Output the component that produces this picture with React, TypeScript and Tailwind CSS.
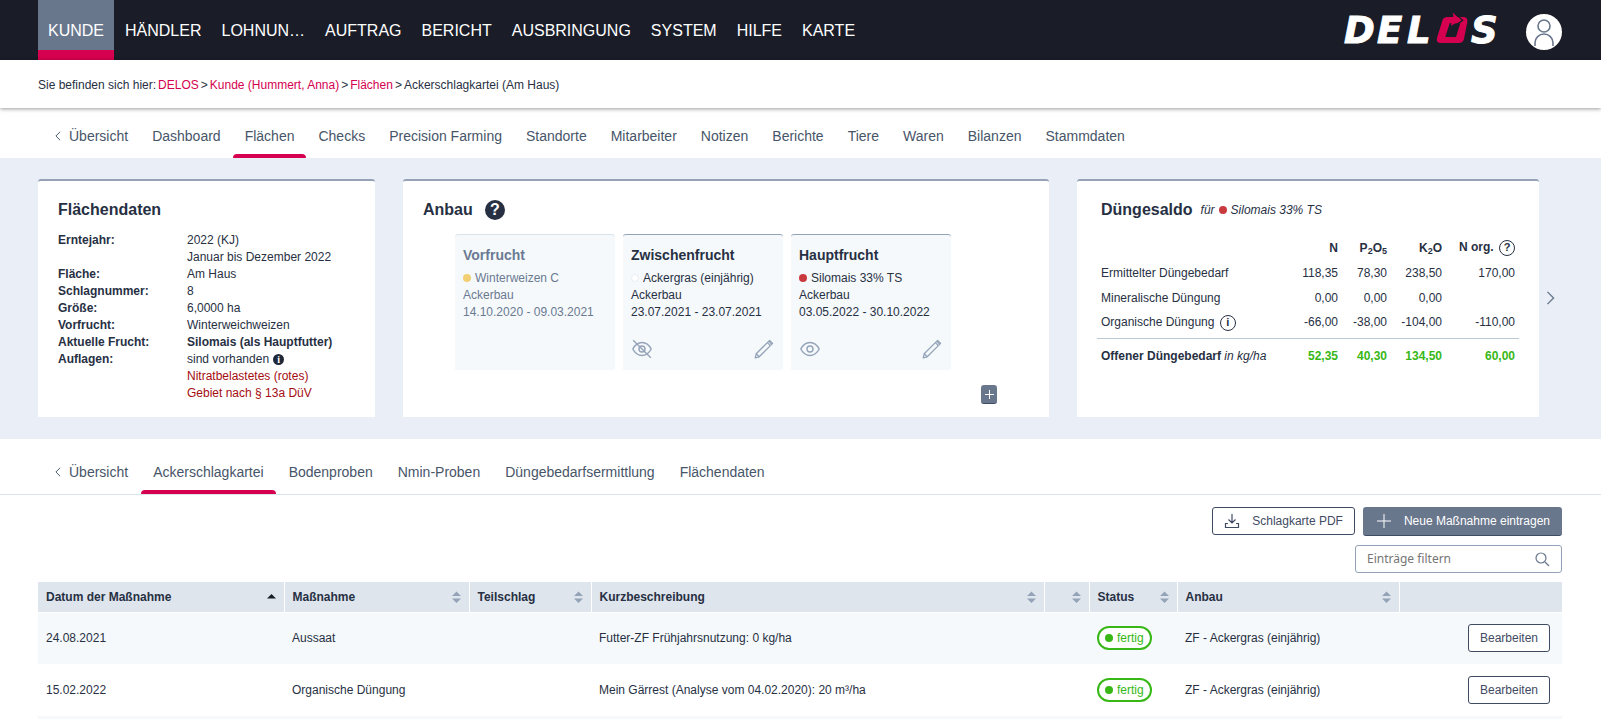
import React from 'react';
import { clsx } from 'clsx';

const mainNav = ['KUNDE', 'HÄNDLER', 'LOHNUN…', 'AUFTRAG', 'BERICHT', 'AUSBRINGUNG', 'SYSTEM', 'HILFE', 'KARTE'];

const customerTabs = [
  'Dashboard', 'Flächen', 'Checks', 'Precision Farming', 'Standorte', 'Mitarbeiter',
  'Notizen', 'Berichte', 'Tiere', 'Waren', 'Bilanzen', 'Stammdaten',
];

const fieldTabs = ['Ackerschlagkartei', 'Bodenproben', 'Nmin-Proben', 'Düngebedarfsermittlung', 'Flächendaten'];

const crops = [
  { title: 'Vorfrucht', dot: 'bg-[#f1cf72]', name: 'Winterweizen C', dates: '14.10.2020 - 09.03.2021', past: true, hidden: false },
  { title: 'Zwischenfrucht', dot: 'bg-white border border-[#e8eef4]', name: 'Ackergras (einjährig)', dates: '23.07.2021 - 23.07.2021', past: false, hidden: true },
  { title: 'Hauptfrucht', dot: 'bg-[#c93a3f]', name: 'Silomais 33% TS', dates: '03.05.2022 - 30.10.2022', past: false, hidden: false },
];

const balance = [
  { label: 'Ermittelter Düngebedarf', values: ['118,35', '78,30', '238,50', '170,00'], info: false },
  { label: 'Mineralische Düngung', values: ['0,00', '0,00', '0,00', ''], info: false },
  { label: 'Organische Düngung', values: ['-66,00', '-38,00', '-104,00', '-110,00'], info: true },
];

const columns = [
  { label: 'Datum der Maßnahme', width: 'w-[246px]', sort: 'asc' },
  { label: 'Maßnahme', width: 'w-[185px]', sort: 'none' },
  { label: 'Teilschlag', width: 'w-[122px]', sort: 'none' },
  { label: 'Kurzbeschreibung', width: '', sort: 'none' },
  { label: '', width: 'w-[45px]', sort: 'none' },
  { label: 'Status', width: 'w-[88px]', sort: 'none' },
  { label: 'Anbau', width: 'w-[222px]', sort: 'none' },
  { label: '', width: 'w-[163px]', sort: '' },
];

const measures = [
  { date: '24.08.2021', type: 'Aussaat', text: 'Futter-ZF Frühjahrsnutzung: 0 kg/ha', crop: 'ZF - Ackergras (einjährig)' },
  { date: '15.02.2022', type: 'Organische Düngung', text: 'Mein Gärrest (Analyse vom 04.02.2020): 20 m³/ha', crop: 'ZF - Ackergras (einjährig)' },
];

const Logo = () => (
  <svg className="overflow-visible" width="157" height="44" viewBox="0 0 157 44" role="img" aria-label="DELOS">
    <g
      fill="#fff"
      stroke="#fff"
      strokeWidth="1"
      fontFamily="'DejaVu Sans', sans-serif"
      fontWeight="700"
      fontStyle="italic"
      fontSize="37"
    >
      <text x="-1" y="35">D</text>
      <text x="32" y="35">E</text>
      <text x="62" y="35">L</text>
      <text x="126" y="35">S</text>
    </g>
    <g transform="scale(.3333) translate(-44 -24)">
      <path
        d="M336 62Q339 51 352 51H398Q413 51 411 66L401 117Q398 129 385 129H331Q317 129 320 114ZM358 70L345 111H377L390 70Z"
        fill="#d5004f"
        fillRule="evenodd"
      />
      <path d="M374 40L397 61 372 79" fill="none" stroke="#1a1d28" strokeWidth="4" />
      <path d="M368 38L391 60 362 78 364 68H352V51H369Z" fill="#d5004f" />
    </g>
  </svg>
);

const Chevron = ({ right = false, className = '' }: { right?: boolean; className?: string }) => (
  <svg className={className} viewBox="0 0 10 16" fill="none" stroke="currentColor" strokeWidth="1.6">
    <path d={right ? 'M1.500 1l7 7-7 7' : 'M8.500 1l-7 7 7 7'} />
  </svg>
);

const EyeIcon = ({ off }: { off: boolean }) => (
  <svg width="20" height="20" viewBox="0 0 20 20" fill="none" stroke="#94a3b8" strokeWidth="1.4">
    <path d="M.8 10C3 5.800 6.300 3.500 10 3.500s7 2.300 9.200 6.500c-2.200 4.200-5.500 6.500-9.200 6.500S3 14.200.8 10z" />
    <circle cx="10" cy="10" r="3" />
    {off && <path d="M1.200 1.200l17.600 17.600" />}
  </svg>
);

const PencilIcon = () => (
  <svg width="20" height="20" viewBox="0 0 20 20" fill="none" stroke="#94a3b8" strokeWidth="1.3" strokeLinejoin="round">
    <path d="M1.200 18.800l1-4L15.600 1.400l3 3L5.200 17.800z" />
    <path d="M13.400 3.600l3 3M14.800 2.200l3 3M2.200 14.800l3 3" />
  </svg>
);

const SortIcon = ({ sort }: { sort: string }) => (
  <svg width="9" height="12" viewBox="0 0 9 12" aria-hidden="true">
    {sort === 'asc' ? (
      <path d="M0 7.500L4.500 3 9 7.500z" fill="#1a1d28" />
    ) : (
      <path d="M0 5L4.500.5 9 5zM0 7.500L4.500 12 9 7.500z" fill="#94a3b8" />
    )}
  </svg>
);

const RoundBadge = ({ children }: { children: string }) => (
  <button
    type="button"
    className="ml-0.5 inline-flex size-4 items-center justify-center rounded-full border border-[#273043] align-middle text-[11px] font-bold leading-none"
  >
    {children}
  </button>
);

const Tabs = ({ items, active, className }: { items: string[]; active: string; className?: string }) => (
  <ul className={clsx('flex text-sm text-[#475569]', className)}>
    {['Übersicht', ...items].map((item, i) => (
      <li key={item} className="relative">
        <a href="#" className="flex items-center px-3 pt-4 pb-3 leading-5">
          {i === 0 && <Chevron className="mr-2 h-2.5 w-1.5" />}
          {item}
        </a>
        {item === active && <span className="absolute inset-x-0 bottom-0 h-1 rounded-t bg-[#d5004f]" />}
      </li>
    ))}
  </ul>
);

const Card = ({ children }: { children: React.ReactNode }) => (
  <section className="rounded-t-[3px] border-t-2 border-[#94a3b8] bg-white px-5 pt-[19px] pb-[13px]">{children}</section>
);

const FieldCard = () => (
  <Card>
    <h2 className="text-base font-bold leading-5">Flächendaten</h2>
    <dl className="mt-3 grid grid-cols-[129px_1fr] leading-[17px] [&_dt]:font-bold">
      <dt>Erntejahr:</dt>
      <dd>
        2022 (KJ)
        <br />
        Januar bis Dezember 2022
      </dd>
      <dt>Fläche:</dt>
      <dd>Am Haus</dd>
      <dt>Schlagnummer:</dt>
      <dd>8</dd>
      <dt>Größe:</dt>
      <dd>6,0000 ha</dd>
      <dt>Vorfrucht:</dt>
      <dd>Winterweichweizen</dd>
      <dt>Aktuelle Frucht:</dt>
      <dd className="font-bold">Silomais (als Hauptfutter)</dd>
      <dt>Auflagen:</dt>
      <dd>
        <span className="flex items-center gap-1">
          sind vorhanden
          <span className="flex size-[11px] items-center justify-center rounded-full bg-[#1f2838] font-['Liberation_Serif',serif] text-[10px] font-bold leading-none text-white">
            i
          </span>
        </span>
        <span className="block text-[#a30d11]">
          Nitratbelastetes (rotes)
          <br />
          Gebiet nach § 13a DüV
        </span>
      </dd>
    </dl>
  </Card>
);

const CropCard = () => (
  <Card>
    <h2 className="flex items-center gap-3 text-base font-bold leading-5">
      Anbau
      <button
        type="button"
        aria-label="Hilfe"
        className="flex size-5 items-center justify-center rounded-full bg-[#273043] text-base font-bold leading-none text-white"
      >
        ?
      </button>
    </h2>
    <div className="mt-3.5 ml-8 flex gap-2">
      {crops.map((crop) => (
        <article
          key={crop.title}
          className={clsx(
            'flex h-[136px] w-40 flex-col rounded-t-[3px] border-t bg-[#f5f9fc] px-2 pt-[11px] pb-[11px]',
            crop.past ? 'border-[#d8e3ec] text-[#6b7a92]' : 'border-[#94a3b8] text-[#273043]'
          )}
        >
          <h3 className="mb-1.5 text-sm font-bold leading-[18px]">{crop.title}</h3>
          <p className="leading-[17px]">
            <span className={clsx('mr-1 inline-block size-2 rounded-full', crop.dot)} />
            {crop.name}
          </p>
          <p className="leading-[17px]">Ackerbau</p>
          <p className="leading-[17px]">{crop.dates}</p>
          {!crop.past && (
            <div className="mt-auto flex justify-between px-px">
              <button type="button" aria-label="Anzeigen">
                <EyeIcon off={crop.hidden} />
              </button>
              <button type="button" aria-label="Bearbeiten">
                <PencilIcon />
              </button>
            </div>
          )}
        </article>
      ))}
    </div>
    <div className="mt-[15px] mr-8 flex justify-end">
      <button
        type="button"
        aria-label="Anbau hinzufügen"
        className="flex h-[19px] w-4 items-center justify-center rounded-[3px] border-b border-[#3f4b62] bg-[#69778d] text-white"
      >
        <svg width="9" height="9" viewBox="0 0 9 9" stroke="currentColor">
          <path d="M4.500 0v9M0 4.500h9" />
        </svg>
      </button>
    </div>
  </Card>
);

const BalanceCard = () => (
  <Card>
    <h2 className="ml-1 flex items-center text-base font-bold leading-5">
      Düngesaldo
      <em className="ml-2 flex items-center gap-1 text-xs font-normal">
        für <span className="size-2 rounded-full bg-[#c93a3f]" /> Silomais 33% TS
      </em>
    </h2>
    <table className="mt-[15px] w-full table-fixed text-right leading-4 [&_td]:px-1 [&_th]:px-1">
      <thead>
        <tr className="h-[25px]">
          <th />
          <th className="w-[54px]">N</th>
          <th className="w-[49px] whitespace-nowrap">
            P<sub className="text-[9px]">2</sub>O<sub className="text-[9px]">5</sub>
          </th>
          <th className="w-[55px]">
            K<sub className="text-[9px]">2</sub>O
          </th>
          <th className="w-[73px] whitespace-nowrap">
            N org. <RoundBadge>?</RoundBadge>
          </th>
        </tr>
      </thead>
      <tbody>
        {balance.map((row) => (
          <tr key={row.label} className="h-[25px] last:h-7 [&:last-child>td]:pb-[3px]">
            <td className="text-left">
              {row.label} {row.info && <RoundBadge>i</RoundBadge>}
            </td>
            {row.values.map((value, i) => (
              <td key={i}>{value}</td>
            ))}
          </tr>
        ))}
      </tbody>
      <tfoot>
        <tr className="h-[35px] border-t border-[#bccad6] font-bold text-[#37b816]">
          <td className="text-left text-[#273043]">
            Offener Düngebedarf <em className="font-normal">in kg/ha</em>
          </td>
          <td>52,35</td>
          <td>40,30</td>
          <td>134,50</td>
          <td>60,00</td>
        </tr>
      </tfoot>
    </table>
  </Card>
);

const MeasureTable = () => (
  <table className="mt-[9px] w-full table-fixed text-left">
    <thead>
      <tr className="h-[30px]">
        {columns.map((col, i) => (
          <th
            key={i}
            className={clsx('border-b border-white bg-[#dee5ed] px-2', i > 0 && 'border-l', col.width)}
          >
            <span className="flex items-center justify-between">
              {col.label}
              {col.sort && (
                <button type="button" aria-label="Sortieren" className="ml-auto">
                  <SortIcon sort={col.sort} />
                </button>
              )}
            </span>
          </th>
        ))}
      </tr>
    </thead>
    <tbody>
      {measures.map((row) => (
        <tr key={row.date} className="h-[52px] odd:bg-[#f5f9fc] [&_td]:px-2">
          <td>{row.date}</td>
          <td>{row.type}</td>
          <td />
          <td>{row.text}</td>
          <td />
          <td>
            <span className="inline-flex h-6 items-center gap-1 rounded-full border-2 border-[#37b816] bg-white px-1.5 text-[#37b816]">
              <span className="size-2 rounded-full bg-[#37b816]" />
              fertig
            </span>
          </td>
          <td>{row.crop}</td>
          <td className="text-right">
            <button type="button" className="mr-1 h-7 rounded-[3px] border border-[#3f4b62] bg-white px-[11px] text-[#3f4b62]">
              Bearbeiten
            </button>
          </td>
        </tr>
      ))}
      <tr className="h-[3px] bg-[#f5f9fc]">
        <td colSpan={8} />
      </tr>
    </tbody>
  </table>
);

export default function App() {
  return (
    <div className="bg-white font-['Liberation_Sans',Arial,sans-serif] text-xs text-[#273043]">
      <header className="flex h-[60px] items-stretch justify-between bg-[#1a1d28] pr-[39px] pl-[38px]">
        <nav className="flex gap-0.5 text-base text-white">
          {mainNav.map((item) => (
            <a
              key={item}
              href="#"
              className={clsx(
                'flex items-center',
                item === 'KUNDE' ? 'border-b-[10px] border-[#d5004f] bg-[#69778d] px-2.5 pt-3' : 'px-[9px] pt-0.5'
              )}
            >
              {item}
            </a>
          ))}
        </nav>
        <div className="flex items-center gap-6">
          <Logo />
          <button type="button" aria-label="Benutzerkonto" className="mt-1 size-9 rounded-full bg-white">
            <svg width="36" height="36" viewBox="0 0 36 36" fill="none" stroke="#69778d" strokeWidth="1.6">
              <circle cx="18" cy="12" r="6" />
              <path d="M9 32v-3a9 9 0 0 1 18 0v3" />
            </svg>
          </button>
        </div>
      </header>

      <nav className="relative flex h-12 items-center gap-0.5 bg-white px-[38px] pt-0.5 shadow-[0_1px_4px_rgba(0,0,0,0.4)]">
        <span>Sie befinden sich hier:</span>
        <a href="#" className="text-[#d5004f]">DELOS</a>
        <span>&gt;</span>
        <a href="#" className="text-[#d5004f]">Kunde (Hummert, Anna)</a>
        <span>&gt;</span>
        <a href="#" className="text-[#d5004f]">Flächen</a>
        <span>&gt;</span>
        <span>Ackerschlagkartei (Am Haus)</span>
      </nav>

      <nav className="px-[43px] pt-0.5">
        <Tabs items={customerTabs} active="Flächen" />
      </nav>

      <div className="flex items-center bg-[#eaeff7] pt-[21px] pr-[46px] pb-[22px] pl-[38px]">
        <div className="grid flex-1 grid-cols-[337fr_646fr_462fr] gap-7">
          <FieldCard />
          <CropCard />
          <BalanceCard />
        </div>
        <button type="button" aria-label="Weiter" className="ml-[7px] text-[#69778d]">
          <Chevron right className="h-3.5 w-[9px]" />
        </button>
      </div>

      <nav className="border-b border-[#dbe3ec] px-[43px] pt-[7px]">
        <Tabs items={fieldTabs} active="Ackerschlagkartei" className="gap-px" />
      </nav>

      <main className="pt-3 pr-[39px] pl-[38px]">
        <div className="flex justify-end gap-2">
          <button type="button" className="flex h-7 items-center gap-3 rounded-[3px] border border-[#3f4b62] px-[11px] text-[#3f4b62]">
            <svg width="16" height="16" viewBox="0 0 16 16" fill="none" stroke="currentColor" strokeWidth="1.2">
              <path d="M8 1v9M4.500 6.500L8 10l3.500-3.500M4 10.500H1.500v4h13v-4H12" />
            </svg>
            Schlagkarte PDF
          </button>
          <button type="button" className="flex h-[29px] items-center gap-3 rounded-[3px] border-b border-[#3f4b62] bg-[#69778d] pr-3 pl-[13px] text-white">
            <svg width="16" height="16" viewBox="0 0 16 16" stroke="currentColor">
              <path d="M8 1v14M1 8h14" />
            </svg>
            Neue Maßnahme eintragen
          </button>
        </div>
        <div className="mt-[9px] flex justify-end">
          <label className="flex h-7 w-[207px] items-center rounded-[3px] border border-[#94a3b8] px-[11px]">
            <input
              type="text"
              aria-label="Einträge filtern"
              placeholder="Einträge filtern"
              className="min-w-0 flex-1 font-['Noto_Sans',sans-serif] outline-none placeholder:text-[#757575]"
            />
            <svg width="15" height="15" viewBox="0 0 15 15" fill="none" stroke="#69778d" strokeWidth="1.2">
              <circle cx="6" cy="6" r="5" />
              <path d="M10 10l4 4" />
            </svg>
          </label>
        </div>
        <MeasureTable />
      </main>
    </div>
  );
}
